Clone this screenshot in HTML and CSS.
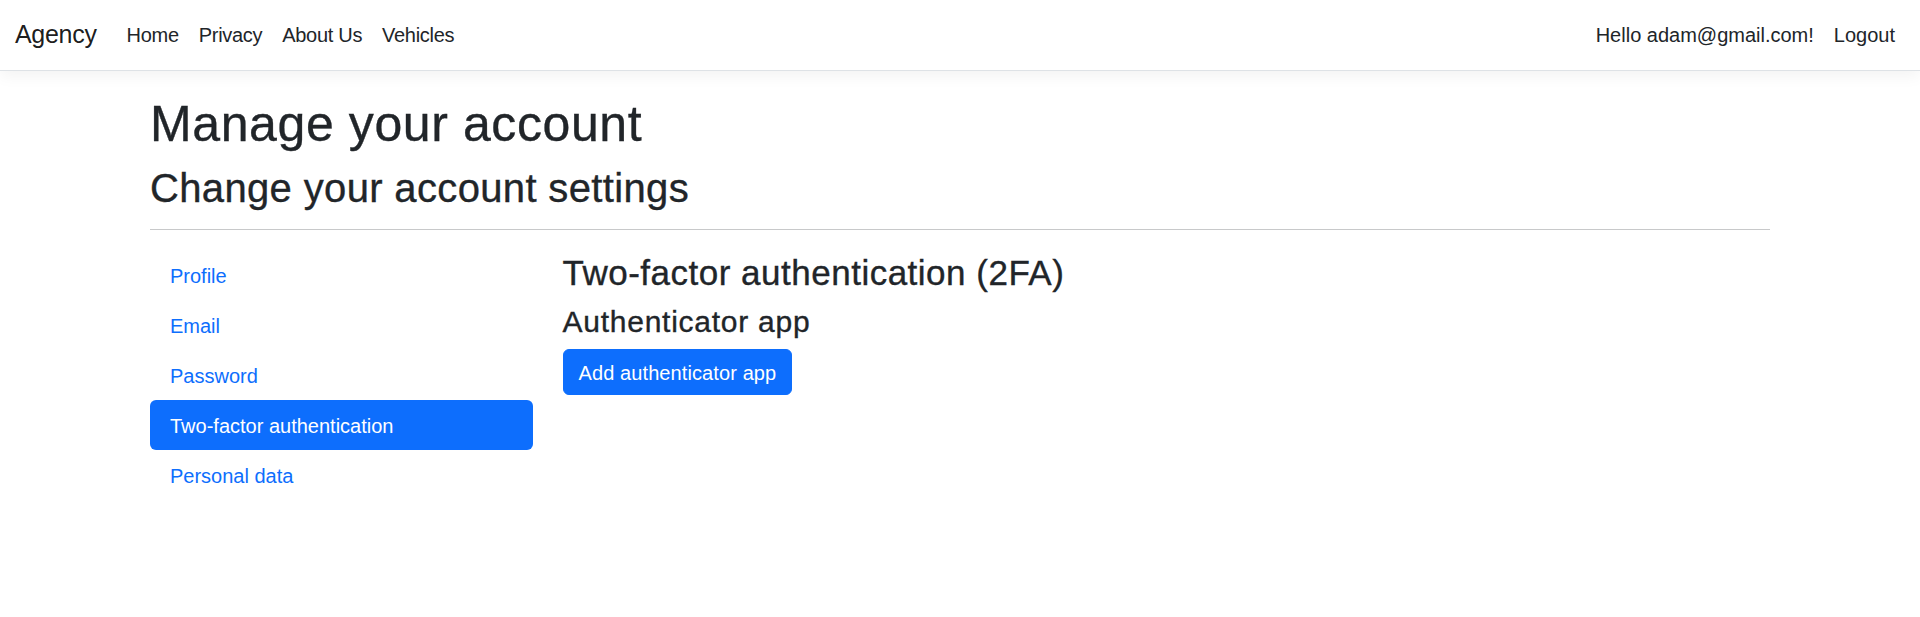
FILE: index.html
```html
<!DOCTYPE html>
<html lang="en">
<head>
<meta charset="utf-8">
<title>Two-factor authentication - Agency</title>
<link rel="stylesheet" href="styles.css">
</head>
<body>
<header>
  <nav class="navbar">
    <div class="navbar-inner">
      <a class="brand" href="#">Agency</a>
      <ul class="nav-main">
        <li><a class="nav-link" href="#">Home</a></li>
        <li><a class="nav-link" href="#">Privacy</a></li>
        <li><a class="nav-link" href="#">About Us</a></li>
        <li><a class="nav-link" href="#">Vehicles</a></li>
      </ul>
      <ul class="nav-user">
        <li><a class="nav-link" href="#">Hello adam@gmail.com!</a></li>
        <li><button class="nav-link btn-link" type="button">Logout</button></li>
      </ul>
    </div>
  </nav>
</header>
<main class="container">
  <h1 class="title">Manage your account</h1>
  <div>
    <h2 class="subtitle">Change your account settings</h2>
    <hr class="divider">
    <div class="row">
      <div class="col-nav">
        <ul class="pills">
          <li><a class="pill-link" href="#">Profile</a></li>
          <li><a class="pill-link" href="#">Email</a></li>
          <li><a class="pill-link" href="#">Password</a></li>
          <li><a class="pill-link active" href="#">Two-factor authentication</a></li>
          <li><a class="pill-link" href="#">Personal data</a></li>
        </ul>
      </div>
      <div class="col-main">
        <h3 class="section-title">Two-factor authentication (2FA)</h3>
        <h4 class="section-sub">Authenticator app</h4>
        <a class="btn-primary" href="#">Add authenticator app</a>
      </div>
    </div>
  </div>
</main>
</body>
</html>
```
FILE: styles.css
```css
*, *::before, *::after {
  box-sizing: border-box;
}

html, body {
  margin: 0;
  padding: 0;
}

body {
  font-family: "Liberation Sans", Arial, sans-serif;
  font-size: 20px;
  line-height: 1.5;
  color: #212529;
  background: #fff;
}

/* Navbar */
.navbar {
  padding: 10px 0;
  border-bottom: 1px solid #dee2e6;
  box-shadow: 0 5px 15px rgba(0, 0, 0, 0.05);
  margin-bottom: 20px;
  background: #fff;
}

.navbar-inner {
  display: flex;
  align-items: center;
  padding: 0 15px;
}

.brand {
  font-size: 25px;
  line-height: 37.5px;
  padding: 6px 0;
  margin-right: 20px;
  color: rgba(0, 0, 0, 0.9);
  text-decoration: none;
  letter-spacing: -0.3px;
}

.nav-main,
.nav-user {
  display: flex;
  list-style: none;
  margin: 0;
  padding: 0;
}

.nav-main {
  flex: 1 1 auto;
}

.nav-main .nav-link {
  letter-spacing: -0.3px;
}

.nav-link {
  display: block;
  padding: 10px;
  line-height: 30px;
  font-size: 20px;
  color: #212529;
  text-decoration: none;
}

.btn-link {
  font-family: inherit;
  background: none;
  border: 0;
  cursor: pointer;
}

/* Main */
.container {
  max-width: 1650px;
  margin: 0 auto;
  padding: 0 15px 20px;
}

.title,
.subtitle,
.section-title,
.section-sub {
  font-weight: 500;
  -webkit-text-stroke: 0.35px currentColor;
}

.title {
  font-size: 50px;
  line-height: 60px;
  margin: 0 0 10px;
  padding-top: 3px;
  letter-spacing: 0.6px;
}

.subtitle {
  font-size: 40px;
  line-height: 48px;
  margin: -3px 0 0;
  padding-top: 3px;
  letter-spacing: 0.35px;
}

.divider {
  margin: 17px 0 20px;
  border: 0;
  border-top: 1px solid #c8c9ca;
  height: 0;
}

.row {
  display: flex;
  margin: 0 -15px;
}

.col-nav {
  flex: 0 0 25%;
  padding: 0 15px;
}

.col-main {
  flex: 0 0 75%;
  padding: 0 15px;
}

.pills {
  list-style: none;
  margin: 0;
  padding: 0;
  display: flex;
  flex-direction: column;
}

.pill-link {
  display: block;
  padding: 11px 20px 9px;
  line-height: 30px;
  color: #0d6efd;
  text-decoration: none;
  border-radius: 6px;
}

.pill-link.active {
  background: #0d6efd;
  color: #fff;
}

.section-title {
  font-size: 35px;
  line-height: 42px;
  margin: 0 0 10px;
  padding-top: 2px;
  letter-spacing: 0.5px;
}

.section-sub {
  font-size: 30px;
  line-height: 36px;
  margin: -2px 0 9px;
  padding-top: 2px;
  letter-spacing: 0.75px;
}

.btn-primary {
  display: inline-block;
  padding: 8px 15px 6px;
  font-size: 20px;
  line-height: 30px;
  color: #fff;
  background: #0d6efd;
  border: 1px solid #0d6efd;
  border-radius: 6px;
  text-decoration: none;
  letter-spacing: 0.1px;
}
```
